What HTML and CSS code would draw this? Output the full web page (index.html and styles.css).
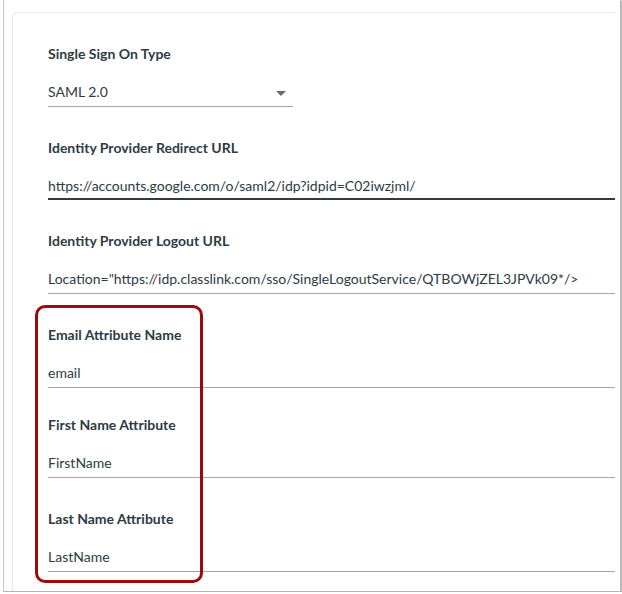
FILE: index.html
```html
<!DOCTYPE html>
<html lang="en">
<head>
<meta charset="utf-8">
<title>SAML settings</title>
<link rel="stylesheet" href="styles.css">
</head>
<body>
<div class="frame">
  <div class="panel">
    <div class="field">
      <div class="label">Single Sign On Type</div>
      <div class="input select">
        <span class="value">SAML 2.0</span>
        <span class="caret"></span>
      </div>
    </div>
    <div class="field">
      <div class="label">Identity Provider Redirect URL</div>
      <div class="input focused"><span class="value">https://accounts.google.com/o/saml2/idp?idpid=C02iwzjml/</span></div>
    </div>
    <div class="field">
      <div class="label">Identity Provider Logout URL</div>
      <div class="input"><span class="value">Location="https://idp.classlink.com/sso/SingleLogoutService/QTBOWjZEL3JPVk09*/&gt;</span></div>
    </div>
    <div class="field field-tight">
      <div class="label">Email Attribute Name</div>
      <div class="input"><span class="value">email</span></div>
    </div>
    <div class="field">
      <div class="label">First Name Attribute</div>
      <div class="input"><span class="value">FirstName</span></div>
    </div>
    <div class="field">
      <div class="label">Last Name Attribute</div>
      <div class="input"><span class="value">LastName</span></div>
    </div>
    <div class="highlight"></div>
  </div>
</div>
</body>
</html>
```
FILE: styles.css
```css
html, body {
  margin: 0;
  padding: 0;
  background: #ffffff;
}

body {
  font-family: Lato, "Open Sans", "Liberation Sans", sans-serif;
  color: #2d3b45;
}

.frame {
  margin-left: 3px;
  width: 616px;
  height: 591px;
  border-left: 1px solid #c9c9c9;
  border-right: 1px solid #b5b5b5;
  border-bottom: 1px solid #b5b5b5;
  box-shadow: 1px 1px 1px rgba(0, 0, 0, 0.25);
  overflow: hidden;
}

.panel {
  position: relative;
  margin-top: 12px;
  margin-left: 8px;
  width: 567px;
  height: 562px;
  padding-left: 35px;
  padding-top: 31px;
  border-top: 1px solid #e6e6e6;
  border-left: 1px solid #e6e6e6;
  border-top-left-radius: 5px;
  box-sizing: content-box;
}

.field {
  margin-bottom: 31px;
}

.field-tight {
  margin-bottom: 27px;
}

.label {
  font-size: 14px;
  font-weight: 700;
  line-height: 20px;
  margin-bottom: 18px;
}

.input {
  display: flex;
  align-items: center;
  height: 20px;
  padding-bottom: 4px;
  border-bottom: 1px solid #a5a5a5;
  font-size: 14px;
  line-height: 20px;
}

.input.focused {
  padding-bottom: 2px;
  border-bottom: 2px solid #2d3b45;
}

.value {
  white-space: nowrap;
}

.select {
  width: 245px;
  justify-content: space-between;
}

.caret {
  width: 0;
  height: 0;
  margin-right: 7px;
  margin-top: 2px;
  border-left: 5px solid transparent;
  border-right: 5px solid transparent;
  border-top: 5px solid #6b6b6b;
}

.highlight {
  position: absolute;
  left: 22px;
  top: 292px;
  width: 162px;
  height: 272px;
  border: 3px solid #9b0a0a;
  border-radius: 10px;
}
```
